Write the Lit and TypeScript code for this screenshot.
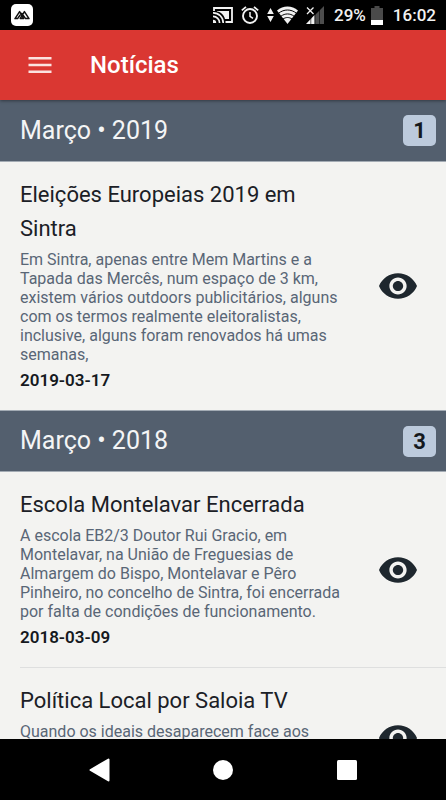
import { LitElement, html, css, nothing } from "lit";
import { customElement, property } from "lit/decorators.js";

interface NewsItem {
  title: string;
  summary: string;
  date?: string;
}

interface NewsMonth {
  label: string;
  count: number;
  items: NewsItem[];
}

const months: NewsMonth[] = [
  {
    label: "Março • 2019",
    count: 1,
    items: [
      {
        title: "Eleições Europeias 2019 em Sintra",
        summary:
          "Em Sintra, apenas entre Mem Martins e a Tapada das Mercês, num espaço de 3 km, existem vários outdoors publicitários, alguns com os termos realmente eleitoralistas, inclusive, alguns foram renovados há umas semanas,",
        date: "2019-03-17",
      },
    ],
  },
  {
    label: "Março • 2018",
    count: 3,
    items: [
      {
        title: "Escola Montelavar Encerrada",
        summary:
          "A escola EB2/3 Doutor Rui Gracio, em Montelavar, na União de Freguesias de Almargem do Bispo, Montelavar e Pêro Pinheiro, no concelho de Sintra, foi encerrada por falta de condições de funcionamento.",
        date: "2018-03-09",
      },
      {
        title: "Política Local por Saloia TV",
        summary: "Quando os ideais desaparecem face aos",
      },
    ],
  },
];

@customElement("status-bar")
export class StatusBar extends LitElement {
  static styles = css`
    :host {
      display: flex;
      flex: none;
      align-items: center;
      height: 30px;
      box-sizing: border-box;
      padding: 0 10px 0 11px;
      background: #000;
      color: #f2f2f2;
      font-size: 17px;
      line-height: 20px;
      font-weight: 500;
    }
    svg {
      display: block;
      flex: none;
    }
    .tray {
      display: flex;
      align-items: center;
      gap: 8px;
      margin-left: auto;
    }
    .network {
      display: flex;
      align-items: center;
      gap: 3px;
    }
    .level {
      display: flex;
      align-items: center;
      gap: 5px;
      padding: 0 2px;
    }
  `;

  render() {
    return html`
      <svg width="22" height="22" viewBox="0 0 22 22" aria-hidden="true">
        <rect width="22" height="22" rx="5" fill="#fff" />
        <path d="M4 14.6 8.6 7.6 12.6 14.6H9.2L13.4 7.6 18 14.6H14.6L10.8 9.4M4 14.6H6.6L9 11.2" fill="none" stroke="#111" stroke-width="1.5" stroke-linejoin="round" stroke-linecap="round" />
      </svg>
      <div class="tray">
        <svg width="20" height="16" viewBox="0 0 20 16" fill="none" stroke="#f2f2f2" aria-hidden="true">
          <path d="M1 4V1H19V15H12.5" stroke-width="1.8" />
          <path d="M4 4H16V12H12C11 8 8 5 4 4.5Z" fill="#f2f2f2" stroke="none" />
          <path d="M0 5.8A10 10 0 0 1 10.2 16M0 9.4A6.5 6.5 0 0 1 6.6 16" stroke-width="1.7" />
          <path d="M0 12.8A3.2 3.2 0 0 1 3.2 16H0Z" fill="#f2f2f2" stroke="none" />
        </svg>
        <svg width="18" height="18" viewBox="0 0 18 18" fill="none" stroke="#f2f2f2" aria-hidden="true">
          <circle cx="9" cy="10" r="7" stroke-width="1.9" />
          <path d="M9 6V10.4L12 12.4" stroke-width="1.5" />
          <path d="M.8 4.4 5 .9M17.2 4.4 13 .9" stroke-width="1.8" />
        </svg>
        <div class="network">
          <svg width="7" height="14" viewBox="0 0 7 14" fill="#f2f2f2" aria-hidden="true">
            <path d="M3.5 0 6.8 6H.2ZM3.5 14 .2 8H6.8Z" />
          </svg>
          <svg width="21" height="18" viewBox="0 0 21 18" aria-hidden="true">
            <path d="M0 4.6C6-.9 15-.9 21 4.6L10.5 18Z" fill="#f2f2f2" />
            <path d="M1.5 7.3C7 2.9 14 2.9 19.5 7.3M4 10.2C8 7.2 13 7.2 17 10.2M6 13C9 11 12 11 15 13" fill="none" stroke="#000" stroke-width="1" />
          </svg>
        </div>
        <svg width="18" height="18" viewBox="0 0 18 18" aria-hidden="true">
          <path d="M18 0V18H8V10Z" fill="#4d4d4d" />
          <path d="M8.5 9V18H0Z" fill="#f2f2f2" />
          <path d="M1 1.5 7.5 8M7.5 1.5 1 8" stroke="#f2f2f2" stroke-width="1.3" />
          <path d="M4.8 12V18M9 8V18M13.5 3V18" stroke="#000" stroke-width=".6" />
        </svg>
        <div class="level">
          <span>29%</span>
          <svg width="12" height="19" viewBox="0 0 12 19" aria-hidden="true">
            <path d="M3.5 0H8.5V2H12V19H0V2H3.5Z" fill="#4a4a4a" />
            <path d="M0 14H12V19H0Z" fill="#fff" />
          </svg>
        </div>
        <time>16:02</time>
      </div>
    `;
  }
}

@customElement("news-item")
export class NewsItemRow extends LitElement {
  @property({ attribute: false }) item!: NewsItem;

  static styles = css`
    :host {
      display: block;
    }
    .row {
      display: flex;
      min-height: 139px;
    }
    .text {
      flex: 1;
      min-width: 0;
      padding: 16px 0 20px;
    }
    h3,
    p {
      margin: 0;
    }
    .title {
      font-size: 22px;
      line-height: 34px;
      font-weight: 400;
      color: #1b2026;
    }
    .summary {
      margin-top: 4px;
      font-size: 16px;
      line-height: 19px;
      color: #596676;
    }
    .date {
      display: block;
      margin-top: 6px;
      font-size: 17px;
      line-height: 20px;
      font-weight: 600;
      color: #15191e;
    }
    .view {
      display: flex;
      flex: none;
      align-items: center;
      justify-content: center;
      width: 96px;
      padding: 0;
      border: 0;
      background: none;
      color: #1e272e;
      cursor: pointer;
    }
  `;

  render() {
    const { title, summary, date } = this.item;
    return html`
      <article class="row">
        <div class="text">
          <h3 class="title">${title}</h3>
          <p class="summary">${summary}</p>
          ${date ? html`<time class="date" datetime=${date}>${date}</time>` : nothing}
        </div>
        <button class="view" type="button" aria-label="Ver notícia">
          <svg width="38" height="26" viewBox="32 104 448 304" fill="currentColor" aria-hidden="true">
            <path d="M256 105c-101.8 0-188.4 62.4-224 151 35.6 88.6 122.2 151 224 151s188.4-62.4 224-151c-35.6-88.6-122.2-151-224-151zm0 251.7c-56 0-101.8-45.3-101.8-100.7S200 155.3 256 155.3 357.8 200.6 357.8 256 312 356.7 256 356.7zm0-161.1c-33.6 0-61.1 27.2-61.1 60.4s27.5 60.4 61.1 60.4 61.1-27.2 61.1-60.4-27.5-60.4-61.1-60.4z" />
          </svg>
        </button>
      </article>
    `;
  }
}

@customElement("app-root")
export class AppRoot extends LitElement {
  static styles = css`
    :host {
      display: flex;
      flex-direction: column;
      height: 100vh;
      overflow: hidden;
      background: #f3f3f1;
      font-family: Roboto, "Liberation Sans", sans-serif;
    }
    h1,
    h2 {
      margin: 0;
    }
    button {
      display: flex;
      align-items: center;
      justify-content: center;
      padding: 0;
      border: 0;
      background: none;
      cursor: pointer;
    }
    .toolbar {
      display: flex;
      flex: none;
      align-items: center;
      gap: 26px;
      height: 70px;
      padding: 0 16px;
      background: #da3732;
      color: #fff;
      box-shadow: 0 1px 3px rgba(0, 0, 0, 0.4);
      z-index: 1;
    }
    .menu {
      width: 48px;
      height: 48px;
      color: #fbe3e1;
    }
    .heading {
      font-size: 24px;
      line-height: 32px;
      font-weight: 500;
    }
    .feed {
      flex: 1;
      min-height: 0;
      overflow-y: auto;
      scrollbar-width: none;
    }
    .month {
      display: flex;
      align-items: center;
      justify-content: space-between;
      height: 62px;
      box-sizing: border-box;
      padding: 0 10px 0 20px;
      border-bottom: 1px solid #a3abb4;
      background: #535f6e;
    }
    section + section .month {
      border-top: 1px solid #a3abb4;
    }
    .label {
      font-size: 25px;
      line-height: 32px;
      font-weight: 400;
      color: #f4f5f6;
    }
    .count {
      min-width: 33px;
      border-radius: 5px;
      background: #bccadc;
      color: #15191e;
      font-size: 22px;
      line-height: 31px;
      font-weight: 700;
      text-align: center;
    }
    .item {
      margin-left: 20px;
    }
    .item + .item {
      border-top: 1px solid #dedfdf;
    }
    .nav {
      display: grid;
      grid-template-columns: repeat(3, 1fr);
      flex: none;
      height: 61px;
      padding: 0 37px;
      background: #000;
    }
  `;

  render() {
    return html`
      <status-bar></status-bar>
      <header class="toolbar">
        <button class="menu" type="button" aria-label="Menu">
          <svg width="24" height="16" viewBox="0 0 24 16" fill="currentColor" aria-hidden="true">
            <path d="M.5 0H23.5V2.6H.5ZM.5 6.7H23.5V9.3H.5ZM.5 13.4H23.5V16H.5Z" />
          </svg>
        </button>
        <h1 class="heading">Notícias</h1>
      </header>
      <main class="feed">
        ${months.map(
          (month) => html`
            <section>
              <div class="month">
                <h2 class="label">${month.label}</h2>
                <span class="count">${month.count}</span>
              </div>
              ${month.items.map((item) => html`<news-item class="item" .item=${item}></news-item>`)}
            </section>
          `,
        )}
      </main>
      <nav class="nav" aria-label="Sistema">
        <button type="button" aria-label="Voltar">
          <svg width="21" height="24" viewBox="0 0 21 24" aria-hidden="true">
            <path d="M19.5 1.5V22.5L1.5 12Z" fill="#fff" stroke="#fff" stroke-width="2" stroke-linejoin="round" />
          </svg>
        </button>
        <button type="button" aria-label="Início">
          <svg width="20" height="20" viewBox="0 0 20 20" aria-hidden="true">
            <circle cx="10" cy="10" r="10" fill="#fff" />
          </svg>
        </button>
        <button type="button" aria-label="Recentes">
          <svg width="20" height="20" viewBox="0 0 20 20" aria-hidden="true">
            <rect width="20" height="20" rx="1.5" fill="#fff" />
          </svg>
        </button>
      </nav>
    `;
  }
}
